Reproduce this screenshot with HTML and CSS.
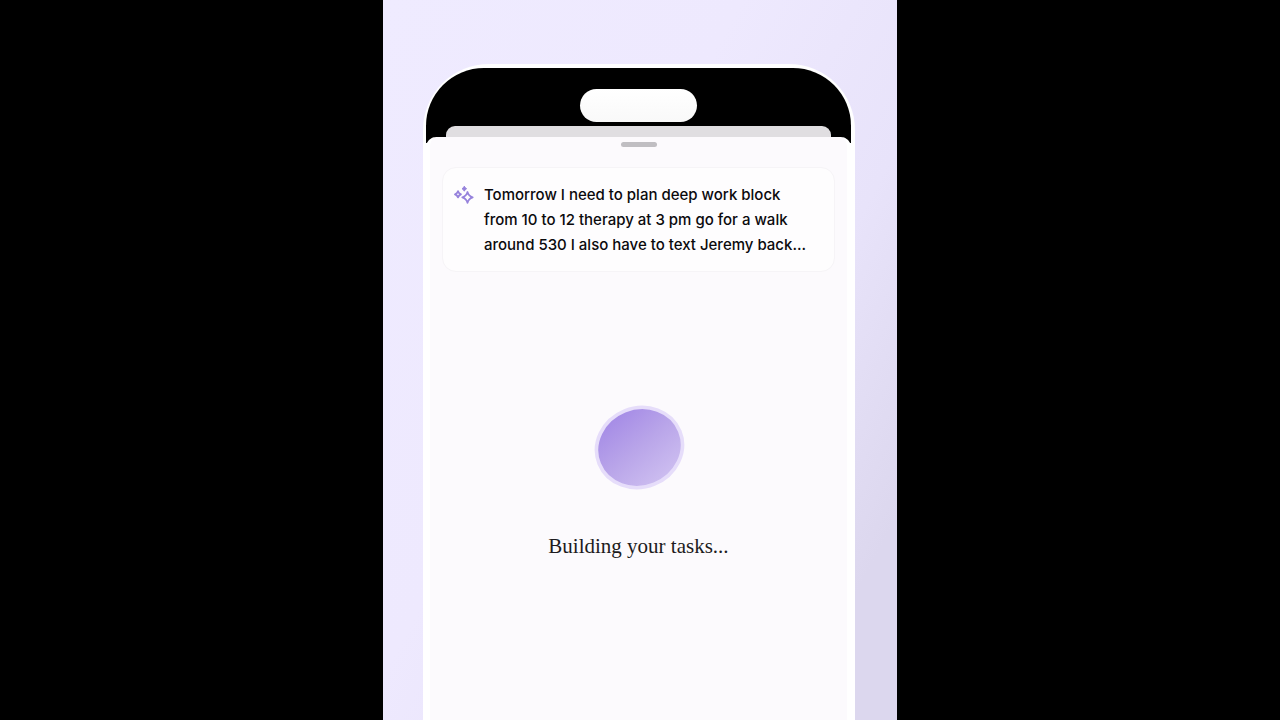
FILE: index.html
```
<!DOCTYPE html>
<html lang="en">
<head>
    <meta charset="UTF-8">
    <meta name="viewport" content="width=device-width, initial-scale=1.0">
    <title>Building your tasks</title>
    <link rel="stylesheet" href="styles.css">
</head>
<body>
    <main class="stage">
        <div class="phone">
            <div class="status-bar">
                <div class="island"></div>
            </div>
            <div class="back-sheet"></div>
            <section class="sheet">
                <div class="grabber"></div>
                <div class="prompt-card">
                    <svg class="sparkles" viewBox="0 0 20 20" aria-hidden="true">
                        <path class="star-line" d="M13.5 7 Q14.6 11.2 18.7 12.3 Q14.6 13.4 13.5 17.8 Q12.4 13.4 8.3 12.3 Q12.4 11.2 13.5 7Z"/>
                        <path class="star-line" d="M4 6.2 Q4.8 8.6 7 9.3 Q4.8 10 4 12.4 Q3.2 10 1 9.3 Q3.2 8.6 4 6.2Z"/>
                        <path class="star-fill" d="M10.3 1.2 Q11 3 12.6 3.7 Q11 4.4 10.3 6.2 Q9.6 4.4 8 3.7 Q9.6 3 10.3 1.2Z"/>
                    </svg>
                    <p class="prompt-text">Tomorrow I need to plan deep work block<br>from 10 to 12 therapy at 3 pm go for a walk<br>around 530 I also have to text Jeremy back...</p>
                </div>
                <div class="loader" role="status">
                    <svg class="blob" viewBox="0 0 92 88" aria-hidden="true">
                        <defs>
                            <linearGradient id="blobFill" x1="0.3" y1="0" x2="0.65" y2="1">
                                <stop offset="0" stop-color="#a48ae6"/>
                                <stop offset="0.5" stop-color="#b9a5e9"/>
                                <stop offset="1" stop-color="#cdbef0"/>
                            </linearGradient>
                        </defs>
                        <ellipse cx="46.5" cy="43.5" rx="43.5" ry="39.5" transform="rotate(-22 46.5 43.5)" fill="url(#blobFill)" stroke="#e6ddfa" stroke-width="3.6"/>
                    </svg>
                    <p class="loader-text">Building your tasks...</p>
                </div>
            </section>
        </div>
    </main>
</body>
</html>
```
FILE: styles.css
```
* {
    box-sizing: border-box;
    margin: 0;
    padding: 0;
}

body {
    background-color: #000;
    font-family: Inter, "Liberation Sans", sans-serif;
}

.stage {
    display: flex;
    width: 100%;
    max-width: 514px;
    height: 100vh;
    margin: 0 auto;
    padding: 64px 42px 0 40px;
    overflow: hidden;
    background: linear-gradient(118deg, #efebff 0%, #eee9fe 40%, #e8e3fa 66%, #dcd7ee 88%, #dcd7ee 100%);
}

.phone {
    display: flex;
    flex-direction: column;
    flex: 1;
    padding: 4px 4px 0 3px;
    border-radius: 66px 66px 0 0;
    background-color: #fff;
    /* black screen area that shows beside the back sheet */
    background-image: linear-gradient(#000, #000);
    background-position: 3px 61px;
    background-size: calc(100% - 7px) 18px;
    background-repeat: no-repeat;
}

.status-bar {
    display: flex;
    justify-content: center;
    height: 58px;
    padding-top: 21px;
    border-radius: 62px 62px 0 0;
    background-color: #000;
}

.island {
    width: 117px;
    height: 33px;
    border-radius: 17px;
    background: linear-gradient(#fff, #f9f9f9);
}

.back-sheet {
    height: 11px;
    margin: 0 20px;
    border-radius: 9px 9px 0 0;
    background-color: #e0dee1;
}

.sheet {
    display: flex;
    flex-direction: column;
    flex: 1;
    padding: 5px 12px 0;
    border: solid #fff;
    border-width: 0 4px;
    border-radius: 10px 10px 0 0;
    background-color: #fcfafd;
}

.grabber {
    width: 36px;
    height: 5px;
    margin: 0 auto 20px;
    border-radius: 3px;
    background-color: #c0bec2;
}

.prompt-card {
    display: flex;
    gap: 10px;
    padding: 14px 11px;
    border: 1px solid #f6f4f7;
    border-radius: 14px;
    background-color: #fefdfe;
}

.sparkles {
    flex: none;
    width: 20px;
    height: 20px;
    margin-top: 3px;
}

.star-line {
    fill: none;
    stroke: #9682dc;
    stroke-width: 1.8;
    stroke-linejoin: round;
}

.star-fill {
    fill: #9682dc;
    stroke: #9682dc;
}

.prompt-text {
    color: #0b0a0d;
    font-size: 15px;
    font-weight: 500;
    line-height: 25px;
    white-space: nowrap;
}

.loader {
    display: flex;
    flex-direction: column;
    align-items: center;
    gap: 41px;
    padding-top: 132px;
}

.blob {
    width: 92px;
    height: 88px;
}

.loader-text {
    color: #1d1b20;
    font-family: "Liberation Serif", serif;
    font-size: 21px;
    line-height: 26px;
}
```
